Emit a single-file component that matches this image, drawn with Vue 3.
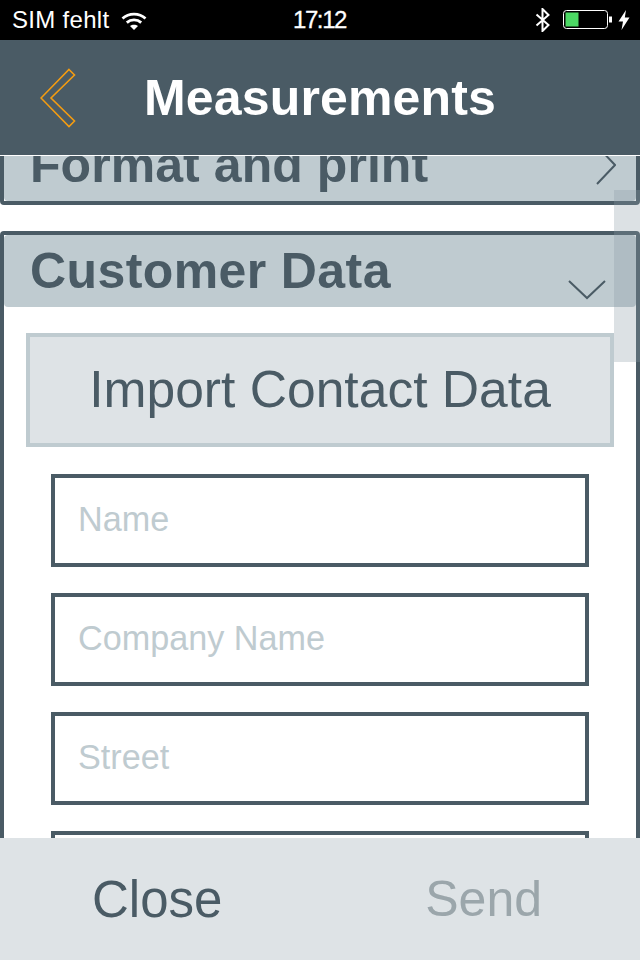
<script setup>
const fields = ['Name', 'Company Name', 'Street', 'City']
</script>

<template>
  <div class="page">
    <div class="status">
      <div class="status-left">
        <span class="sim">SIM fehlt</span>
        <svg class="wifi" width="26" height="18" viewBox="0 0 26 18">
          <path d="M1.5 6.5C7.8 0.7 18.2 0.7 24.5 6.5" fill="none" stroke="#fff" stroke-width="2.8" />
          <path d="M5.8 10.6C9.8 7 16.2 7 20.2 10.6" fill="none" stroke="#fff" stroke-width="2.8" />
          <path d="M9 14C11.2 12.3 14.8 12.3 17 14L13 18Z" fill="#fff" />
        </svg>
      </div>
      <span class="time">17:12</span>
      <div class="status-right">
        <svg class="bt" width="16" height="24" viewBox="0 0 16 24">
          <path d="M1.5 6.5L13.5 17L7.5 23V1L13.5 7L1.5 17.5" fill="none" stroke="#fff" stroke-width="2" />
        </svg>
        <svg class="battery" width="50" height="20" viewBox="0 0 50 20">
          <rect x="0.5" y="0.5" width="44" height="18" rx="3" fill="none" stroke="#fff" stroke-width="1" />
          <rect x="2.5" y="2.5" width="13" height="14" fill="#4cd964" />
          <rect x="46" y="6.5" width="3" height="6" fill="#fff" />
        </svg>
        <svg width="12" height="20" viewBox="0 0 12 20">
          <path d="M8 0L0.5 11.5H5L3.5 20L11.5 7.5H6.8Z" fill="#fff" />
        </svg>
      </div>
    </div>

    <header class="nav">
      <svg class="back" width="36" height="60" viewBox="0 0 36 60">
        <path d="M29 1.5L34.5 7L11 30L34.5 53L29 58.5L1 30Z" fill="none" stroke="#f39c12" stroke-width="1.6" />
      </svg>
      <h1>Measurements</h1>
    </header>

    <main class="content">
      <div class="scroll-thumb"></div>
      <section class="panel first">
        <div class="panel-head">
          <h2>Format and print</h2>
          <svg class="chev-right" width="20" height="40" viewBox="0 0 20 40">
            <path d="M1 1L19 20L1 39" fill="none" stroke="#4a5b65" stroke-width="2" />
          </svg>
        </div>
      </section>

      <section class="panel">
        <div class="panel-head">
          <h2 class="wide">Customer Data</h2>
          <svg class="chev-down" width="38" height="20" viewBox="0 0 38 20">
            <path d="M1 1L19 18L37 1" fill="none" stroke="#4a5b65" stroke-width="2" />
          </svg>
        </div>
        <div class="panel-body">
          <button class="import" type="button">Import Contact Data</button>
          <div class="fields">
            <input v-for="f in fields" :key="f" class="field" type="text" :placeholder="f === 'City' ? '' : f" />
          </div>
        </div>
      </section>
    </main>

    <footer class="footer">
      <button class="foot-btn" type="button">Close</button>
      <button class="foot-btn off" type="button">Send</button>
    </footer>
  </div>
</template>

<style>
body {
  margin: 0;
  background: #fff;
}
</style>

<style scoped>
.page {
  width: 640px;
  height: 960px;
  display: flex;
  flex-direction: column;
  overflow: hidden;
  font-family: "Liberation Sans", Arial, sans-serif;
  color: #4a5b65;
  background: #fff;
  position: relative;
}
.status {
  height: 40px;
  flex: none;
  background: #000;
  color: #fff;
  display: grid;
  grid-template-columns: 1fr auto 1fr;
  align-items: center;
  font-size: 24px;
}
.status-left {
  display: flex;
  align-items: center;
  padding-left: 12px;
  gap: 12px;
}
.sim {
  letter-spacing: 0.3px;
}
.wifi {
  margin-top: 1px;
}
.time {
  letter-spacing: -1.4px;
  font-weight: 400;
  margin-left: -1px;
  -webkit-text-stroke: 0.3px #fff;
}
.status-right {
  display: flex;
  align-items: center;
  justify-content: flex-end;
  padding-right: 10px;
  gap: 13px;
}
.bt {
  margin-right: -1px;
}
.battery {
  margin-right: -8px;
}
.nav {
  height: 115px;
  flex: none;
  box-sizing: content-box;
  border-bottom: 1px solid #fff;
  background: #4a5b65;
  position: relative;
  display: flex;
  align-items: center;
  justify-content: center;
}
.nav h1 {
  margin: 0;
  font-size: 50px;
  font-weight: 700;
  letter-spacing: 0.15px;
  color: #fff;
}
.back {
  position: absolute;
  left: 40px;
  top: 28px;
}
.content {
  flex: 1;
  min-height: 0;
  overflow: hidden;
  position: relative;
}
.scroll-thumb {
  position: absolute;
  top: 34px;
  right: 0;
  width: 26px;
  height: 172px;
  background: rgba(140, 155, 165, 0.3);
  z-index: 2;
}
.panel {
  border: 4px solid #4a5b65;
  border-radius: 4px;
  margin-bottom: 26px;
}
.panel.first {
  margin-top: -31px;
}
.panel-head {
  height: 72px;
  background: #bfcbd0;
  border-radius: 4px;
  display: flex;
  align-items: center;
  padding: 0 20px 0 26px;
}
.panel-head h2 {
  margin: 0;
  font-size: 50px;
  font-weight: 700;
  line-height: 72px;
  letter-spacing: 0.06px;
}
.panel-head h2.wide {
  letter-spacing: 0.4px;
}
.chev-right {
  margin-left: auto;
}
.chev-down {
  margin-left: auto;
  margin-top: 38px;
  margin-right: 10px;
}
.panel-body {
  padding: 26px 22px 0 22px;
}
.import {
  display: block;
  width: 100%;
  height: 114px;
  box-sizing: border-box;
  border: 4px solid #bfcbd0;
  background: #dee3e6;
  color: #4a5b65;
  font: 400 51.6px "Liberation Sans", Arial, sans-serif;
  padding: 0 0 3px;
}
.fields {
  display: flex;
  flex-direction: column;
  gap: 26px;
  padding: 27px 25px 0 25px;
}
.field {
  display: block;
  height: 93px;
  box-sizing: border-box;
  border: 4px solid #4a5b65;
  outline: none;
  background: #fff;
  padding: 0 23px 2px;
  font: 400 34.2px "Liberation Sans", Arial, sans-serif;
  border-radius: 0;
}
.field::placeholder {
  color: #bfcbd0;
  opacity: 1;
}
.footer {
  position: absolute;
  top: 838px;
  left: 0;
  width: 640px;
  height: 122px;
  background: #dee3e6;
  display: flex;
  justify-content: space-between;
  align-items: center;
  padding: 0 98px 0 92px;
  box-sizing: border-box;
  z-index: 3;
}
.foot-btn {
  border: 0;
  background: none;
  padding: 0;
  font: 400 51px "Liberation Sans", Arial, sans-serif;
  color: #4a5b65;
}
.foot-btn.off {
  color: #9ba6ab;
  font-size: 50px;
}
</style>
